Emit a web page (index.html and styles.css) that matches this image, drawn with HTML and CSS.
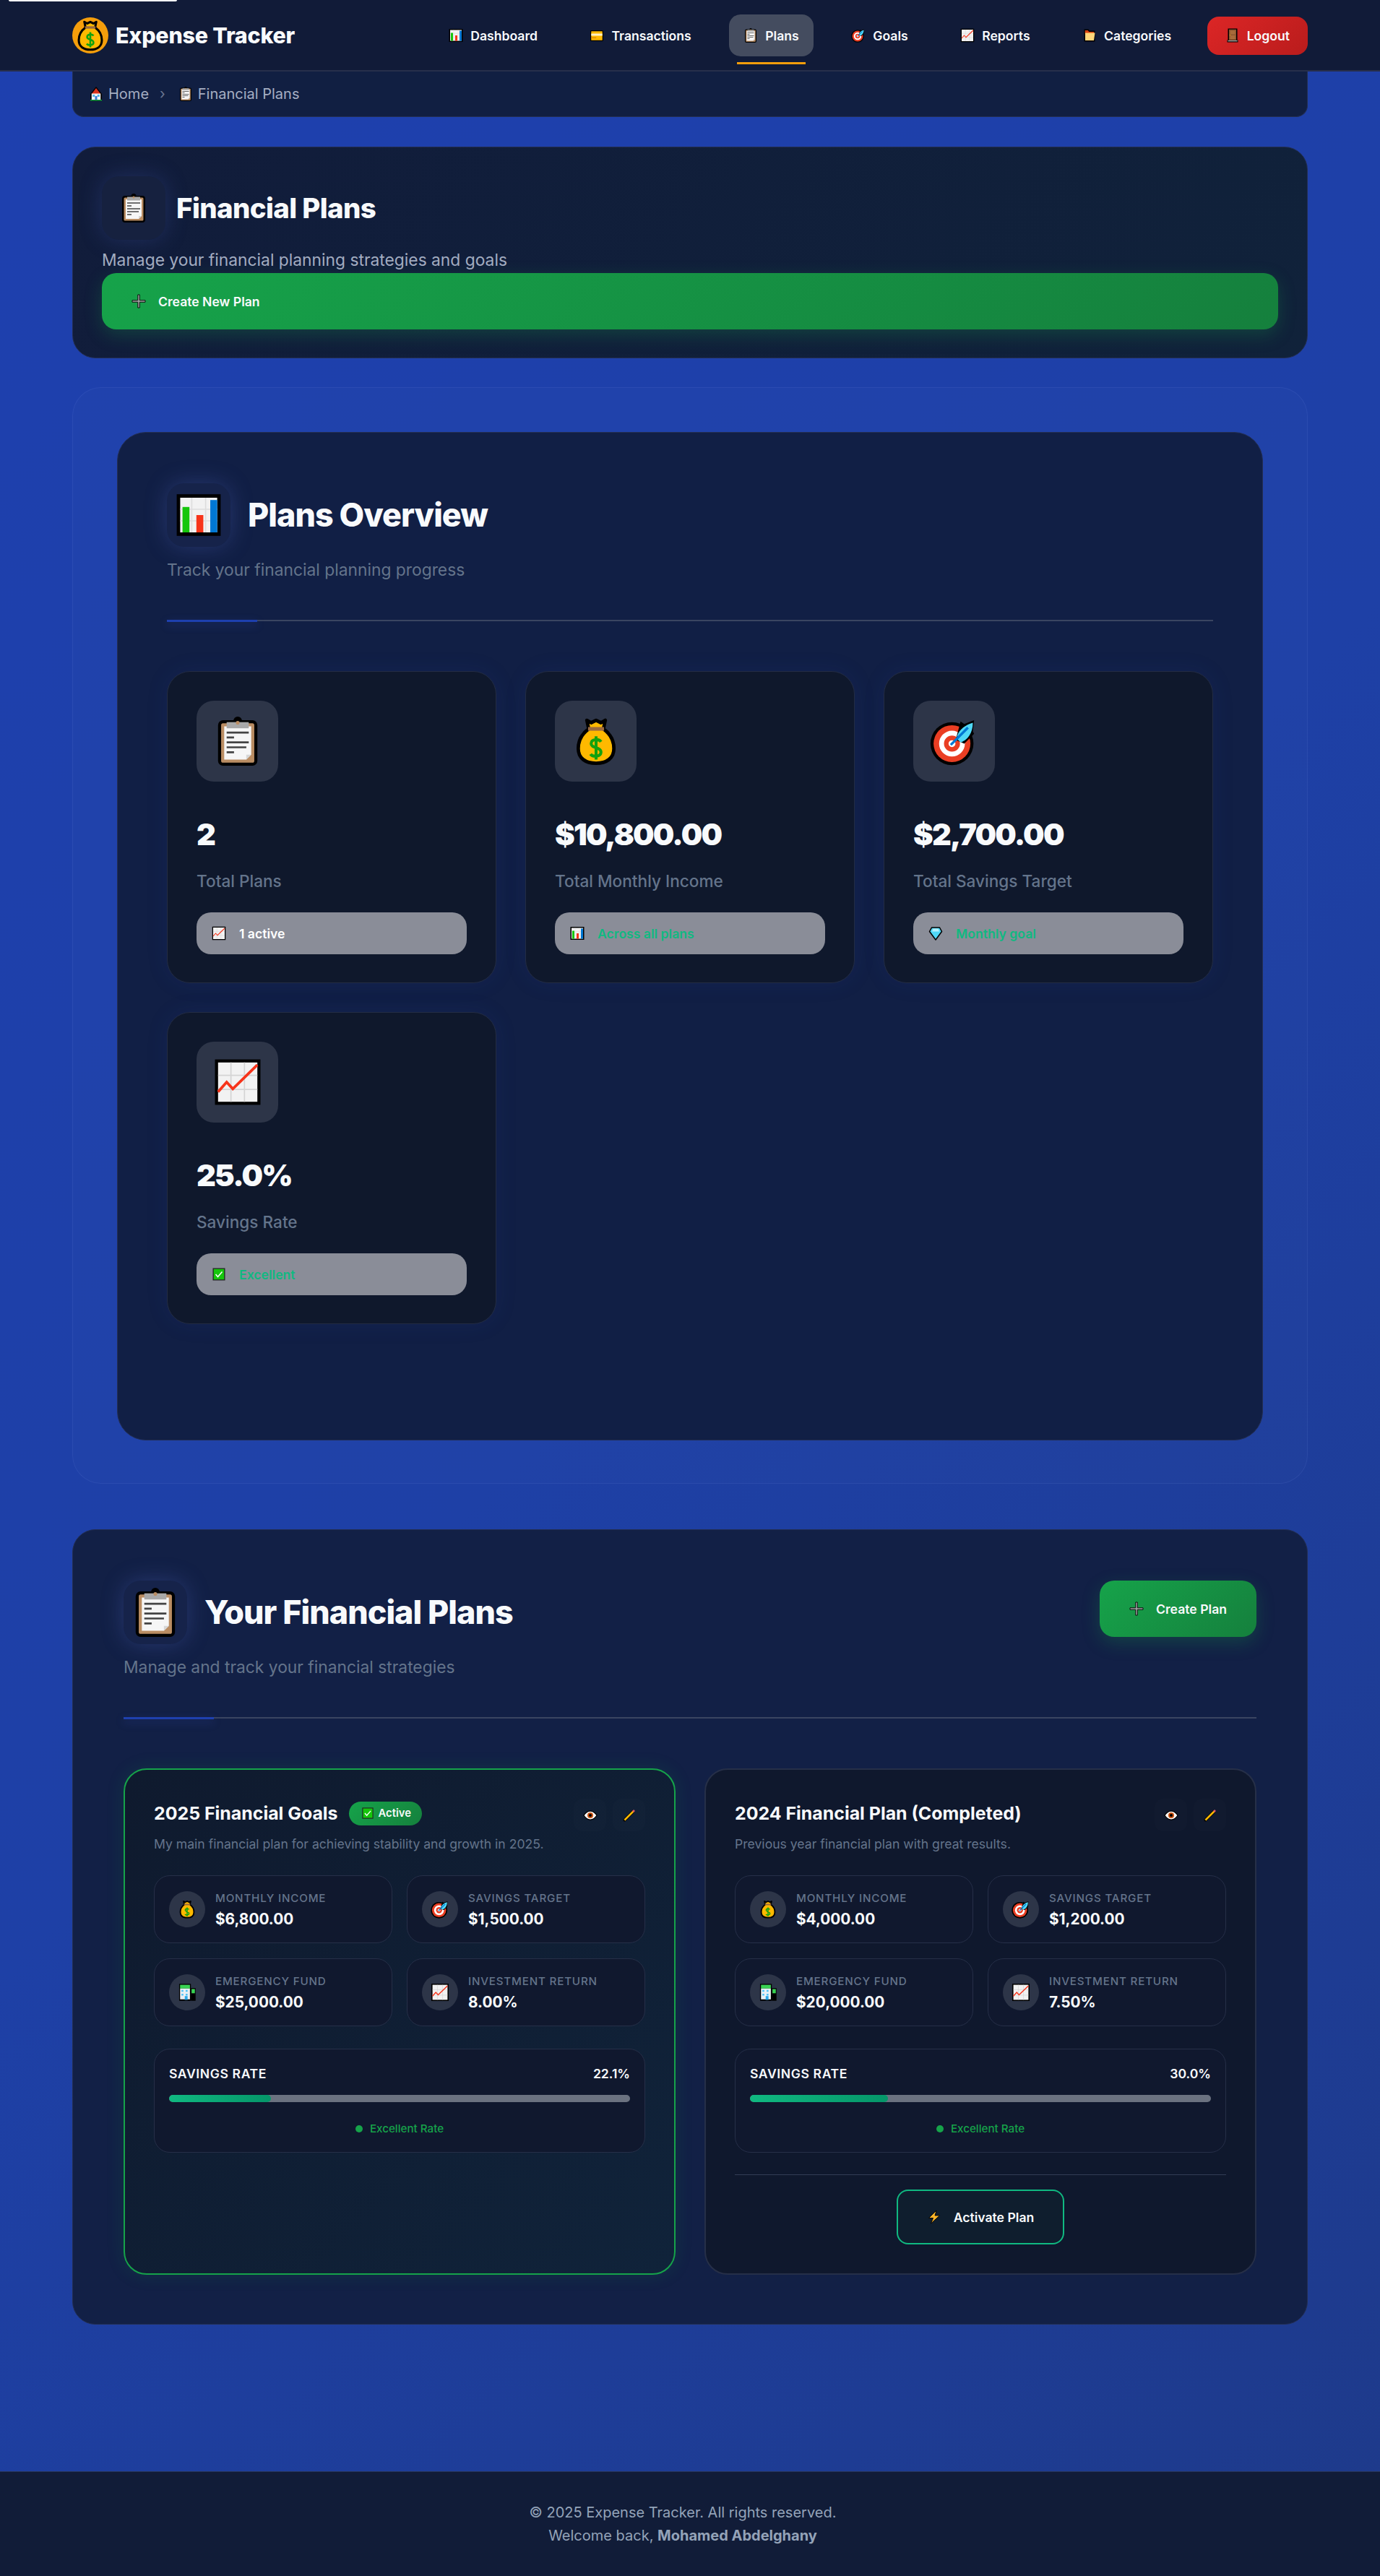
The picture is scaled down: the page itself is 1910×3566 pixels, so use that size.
FILE: index.html
```html
<!DOCTYPE html>
<html lang="en">
  <head>
    <meta charset="UTF-8" />
    <meta name="viewport" content="width=device-width, initial-scale=1.0" />
    <title>Financial Plans - Expense Tracker</title>
    <link rel="stylesheet" href="styles.css">
  </head>

  <body>
    <svg class="icon-defs" xmlns="http://www.w3.org/2000/svg">
      <symbol id="i-clipboard" viewBox="0 0 40 40">
        <circle cx="20" cy="3.500" r="3.500" fill="#000" />
        <rect x="4" y="3" width="32" height="37" rx="4" fill="#000" />
        <rect x="6.500" y="5.500" width="27" height="32" rx="1.500" fill="#ba8d63" />
        <path d="M9 8h22v23l-4 4H9z" fill="#f6f6f6" />
        <path d="M27 35l4-4h-4z" fill="#d6d6d6" />
        <rect x="11" y="4.500" width="18" height="5" fill="#a8a8a8" />
        <circle cx="20" cy="5" r="1.500" fill="#ba8d63" />
        <path d="M11 13h18M11 17h6M11 21h18M11 25h16M11 29h6" stroke="#444" stroke-width="1.600" fill="none" />
      </symbol>
      <symbol id="i-bag" viewBox="0 0 40 40">
        <path d="M12.500 3L16 5l4-2 4 2 3.500-2L26 10c5.500 4 8.500 10 8.500 16 0 8-6 12-14.500 12S5.500 34 5.500 26c0-6 3-12 8.500-16z" fill="#ffb900" stroke="#000" stroke-width="2.800" stroke-linejoin="round" />
        <rect x="13.500" y="8.500" width="13" height="3" fill="#9c6b3f" />
        <path d="M24 20.500c-1.500-2.500-8-2.500-8 1.500 0 4 8 2.500 8 7 0 4-7 4-8.500 1.500M20 16v19" fill="none" stroke="#13a10e" stroke-width="2.400" />
      </symbol>
      <symbol id="i-chart" viewBox="0 0 40 40">
        <rect x="1" y="2" width="38" height="36" fill="#000" />
        <rect x="4" y="5" width="32" height="30" fill="#f2f2f2" />
        <path d="M14 5v30M26 5v30M4 15h32M4 25h32" stroke="#ddd" stroke-width="1" />
        <rect x="6" y="13" width="6" height="22" fill="#16c60c" />
        <rect x="18" y="20" width="6" height="15" fill="#f7341a" />
        <rect x="30" y="7" width="6" height="28" fill="#0078d4" />
      </symbol>
      <symbol id="i-trend" viewBox="0 0 40 40">
        <rect x="1.500" y="1.500" width="37" height="37" fill="#000" />
        <rect x="4" y="4" width="32" height="32" fill="#f2f2f2" />
        <path d="M14.500 4v32M25.500 4v32M4 14.500h32M4 26h32" stroke="#d4d4d4" stroke-width="1" />
        <path d="M4 28l7-8 5 5.500L36 6" fill="none" stroke="#f7341a" stroke-width="2.200" />
      </symbol>
      <symbol id="i-target" viewBox="0 0 40 40">
        <circle cx="18" cy="22" r="17.500" fill="#000" />
        <circle cx="18" cy="22" r="15" fill="#ea3e23" />
        <circle cx="18" cy="22" r="10.500" fill="#fff" />
        <circle cx="18" cy="22" r="6.500" fill="#ea3e23" />
        <circle cx="18" cy="22" r="2.800" fill="#fff" />
        <path d="M25 4l3 2 8-3-1 9 1 2-8 8-7-3z" fill="#000" />
        <path d="M22 18c0-6 6-11 13-13 0 8-4 14-10 16z" fill="#50d8f7" />
        <path d="M17 23L31 9" stroke="#0078d4" stroke-width="2" />
      </symbol>
      <symbol id="i-card" viewBox="0 0 40 40">
        <rect x="2" y="6" width="36" height="30" rx="3" fill="#000" />
        <rect x="4.500" y="8.500" width="31" height="25" rx="1" fill="#ffb900" />
        <rect x="4.500" y="15" width="31" height="6" fill="#fff1c8" />
        <rect x="4.500" y="25" width="14" height="3" fill="#e08a00" />
      </symbol>
      <symbol id="i-folder" viewBox="0 0 40 40">
        <path d="M5 3h12l3 4h15v30H5z" fill="#000" />
        <path d="M7.500 6h8l3 4h14v5H7.500z" fill="#d9420f" />
        <path d="M8 13h27l-3 21H8z" fill="#ffd679" />
      </symbol>
      <symbol id="i-door" viewBox="0 0 40 40">
        <rect x="7" y="1" width="26" height="36" fill="#000" />
        <rect x="10" y="3.500" width="20" height="31" fill="#8e562e" />
        <path d="M13 7h14v10H13zM13 20h14v11H13z" fill="#a96b3a" />
        <circle cx="13" cy="19" r="1.200" fill="#ffb900" />
        <rect x="5" y="33" width="30" height="6" fill="#000" />
        <rect x="7" y="34" width="26" height="2.500" fill="#b3b3b3" />
      </symbol>
      <symbol id="i-house" viewBox="0 0 40 40">
        <path d="M20 0L4 20v20h32V20z" fill="#000" />
        <path d="M20 4L7.500 20h25z" fill="#d9321c" />
        <rect x="7.500" y="19" width="25" height="17" fill="#f4f4f4" />
        <rect x="10.500" y="22" width="6" height="6" fill="#50b8e8" />
        <rect x="23.500" y="22" width="6" height="6" fill="#50b8e8" />
        <rect x="17" y="26" width="6" height="10" fill="#3a7bd5" />
        <rect x="4" y="36" width="32" height="3" fill="#16a34a" />
      </symbol>
      <symbol id="i-plus" viewBox="0 0 40 40">
        <path d="M17.500 2h5v15.500H38v5H22.500V38h-5V22.500H2v-5h15.500z" fill="#a0a0a0" stroke="#000" stroke-width="1.800" />
      </symbol>
      <symbol id="i-diamond" viewBox="0 0 40 40">
        <path d="M9 4h22l6 11-17 23L3 15z" fill="#50d8f7" stroke="#000" stroke-width="3" stroke-linejoin="round" />
        <path d="M13 7h14l3 8H10z" fill="#b5f0ff" />
      </symbol>
      <symbol id="i-check" viewBox="0 0 40 40">
        <rect x="3" y="3" width="34" height="34" fill="#222" />
        <rect x="5.500" y="5.500" width="29" height="29" fill="#16c60c" />
        <path d="M11 20l6 7 12-14" fill="none" stroke="#fff" stroke-width="3" />
      </symbol>
      <symbol id="i-eye" viewBox="0 0 40 40">
        <path d="M2 20c5-8 11-12 18-12s13 4 18 12c-5 8-11 12-18 12S7 28 2 20z" fill="#fff" stroke="#000" stroke-width="2.500" />
        <circle cx="20" cy="20" r="8" fill="#c8500f" />
        <circle cx="20" cy="20" r="4" fill="#000" />
      </symbol>
      <symbol id="i-pencil" viewBox="0 0 40 40">
        <path d="M5 35L32 8" stroke="#000" stroke-width="8" />
        <path d="M6 34L32 8" stroke="#ffb900" stroke-width="5" />
        <path d="M30 10l4-4" stroke="#e0566b" stroke-width="5" />
        <path d="M3 37l2-6 4 4z" fill="#000" />
      </symbol>
      <symbol id="i-building" viewBox="0 0 40 40">
        <rect x="3" y="2" width="25" height="36" fill="#000" />
        <rect x="5" y="4" width="21" height="8" fill="#39d353" />
        <rect x="5" y="12" width="21" height="23" fill="#e9f0f4" />
        <path d="M8 15h4v4H8zM17 15h4v4h-4zM8 23h4v4H8zM17 23h4v4h-4z" fill="#4fc3f7" />
        <rect x="15" y="28" width="6" height="8" fill="#29a8e8" />
        <rect x="28" y="11" width="10" height="27" fill="#000" />
        <rect x="29.500" y="13" width="7" height="9" fill="#39d353" />
      </symbol>
      <symbol id="i-bolt" viewBox="0 0 40 40">
        <path d="M26 2L5 23h12l-6 15 24-22H22z" fill="#fbb42a" stroke="#000" stroke-width="1.800" stroke-linejoin="round" />
      </symbol>
    </svg>

    <div class="skip-bar"></div>

    <header class="navbar">
      <div class="navbar-inner">
        <a class="brand">
          <span class="brand-logo"><svg class="ic ic-logo"><use href="#i-bag" /></svg></span>
          <span class="brand-name">Expense Tracker</span>
        </a>
        <nav class="nav-links">
          <a class="nav-link"><svg class="ic"><use href="#i-chart" /></svg>Dashboard</a>
          <a class="nav-link"><svg class="ic"><use href="#i-card" /></svg>Transactions</a>
          <a class="nav-link active"><svg class="ic"><use href="#i-clipboard" /></svg>Plans</a>
          <a class="nav-link"><svg class="ic"><use href="#i-target" /></svg>Goals</a>
          <a class="nav-link"><svg class="ic"><use href="#i-trend" /></svg>Reports</a>
          <a class="nav-link"><svg class="ic"><use href="#i-folder" /></svg>Categories</a>
          <a class="nav-link logout"><svg class="ic"><use href="#i-door" /></svg>Logout</a>
        </nav>
      </div>
    </header>

    <main class="container">
      <div class="breadcrumb">
        <svg class="ic"><use href="#i-house" /></svg>
        <span>Home</span>
        <span class="crumb-sep">›</span>
        <svg class="ic"><use href="#i-clipboard" /></svg>
        <span>Financial Plans</span>
      </div>

      <section class="hero">
        <div class="hero-title">
          <span class="hero-icon"><svg class="ic ic-40"><use href="#i-clipboard" /></svg></span>
          <h1>Financial Plans</h1>
        </div>
        <p class="hero-sub">Manage your financial planning strategies and goals</p>
        <a class="btn-green btn-wide"><svg class="ic"><use href="#i-plus" /></svg>Create New Plan</a>
      </section>

      <div class="overview-wrap">
        <section class="overview">
          <div class="section-title">
            <span class="title-icon"><svg class="ic ic-64"><use href="#i-chart" /></svg></span>
            <h2>Plans Overview</h2>
          </div>
          <p class="section-sub">Track your financial planning progress</p>
          <div class="section-rule"></div>

          <div class="stats">
            <div class="stat-card">
              <span class="stat-icon"><svg class="ic ic-68"><use href="#i-clipboard" /></svg></span>
              <div class="stat-value">2</div>
              <div class="stat-label">Total Plans</div>
              <div class="stat-pill pill-white"><svg class="ic"><use href="#i-trend" /></svg>1 active</div>
            </div>
            <div class="stat-card">
              <span class="stat-icon"><svg class="ic ic-68"><use href="#i-bag" /></svg></span>
              <div class="stat-value">$10,800.00</div>
              <div class="stat-label">Total Monthly Income</div>
              <div class="stat-pill"><svg class="ic"><use href="#i-chart" /></svg>Across all plans</div>
            </div>
            <div class="stat-card">
              <span class="stat-icon"><svg class="ic ic-68"><use href="#i-target" /></svg></span>
              <div class="stat-value">$2,700.00</div>
              <div class="stat-label">Total Savings Target</div>
              <div class="stat-pill"><svg class="ic"><use href="#i-diamond" /></svg>Monthly goal</div>
            </div>
            <div class="stat-card">
              <span class="stat-icon"><svg class="ic ic-68"><use href="#i-trend" /></svg></span>
              <div class="stat-value">25.0%</div>
              <div class="stat-label">Savings Rate</div>
              <div class="stat-pill"><svg class="ic"><use href="#i-check" /></svg>Excellent</div>
            </div>
          </div>
        </section>
      </div>

      <section class="plans">
        <div class="plans-head">
          <div>
            <div class="section-title">
              <span class="title-icon"><svg class="ic ic-68"><use href="#i-clipboard" /></svg></span>
              <h2>Your Financial Plans</h2>
            </div>
            <p class="section-sub">Manage and track your financial strategies</p>
          </div>
          <a class="btn-green"><svg class="ic"><use href="#i-plus" /></svg>Create Plan</a>
        </div>
        <div class="section-rule"></div>

        <div class="plan-grid">
          <article class="plan-card is-active">
            <div class="plan-head">
              <div class="plan-name">
                <h3>2025 Financial Goals</h3>
                <span class="badge"><svg class="ic ic-18"><use href="#i-check" /></svg>Active</span>
              </div>
              <div class="plan-actions">
                <span class="action-btn"><svg class="ic"><use href="#i-eye" /></svg></span>
                <span class="action-btn"><svg class="ic"><use href="#i-pencil" /></svg></span>
              </div>
            </div>
            <p class="plan-desc">My main financial plan for achieving stability and growth in 2025.</p>
            <div class="metrics">
              <div class="metric">
                <span class="metric-icon"><svg class="ic ic-26"><use href="#i-bag" /></svg></span>
                <div class="metric-text"><div class="metric-label">Monthly Income</div><div class="metric-value">$6,800.00</div></div>
              </div>
              <div class="metric">
                <span class="metric-icon"><svg class="ic ic-26"><use href="#i-target" /></svg></span>
                <div class="metric-text"><div class="metric-label">Savings Target</div><div class="metric-value">$1,500.00</div></div>
              </div>
              <div class="metric">
                <span class="metric-icon"><svg class="ic ic-26"><use href="#i-building" /></svg></span>
                <div class="metric-text"><div class="metric-label">Emergency Fund</div><div class="metric-value">$25,000.00</div></div>
              </div>
              <div class="metric">
                <span class="metric-icon"><svg class="ic ic-26"><use href="#i-trend" /></svg></span>
                <div class="metric-text"><div class="metric-label">Investment Return</div><div class="metric-value">8.00%</div></div>
              </div>
            </div>
            <div class="rate-box">
              <div class="rate-head"><span class="rate-label">Savings Rate</span><span>22.1%</span></div>
              <div class="rate-track"><div class="rate-fill" style="width: 22.1%"></div></div>
              <div class="rate-status"><span class="rate-dot"></span>Excellent Rate</div>
            </div>
          </article>

          <article class="plan-card">
            <div class="plan-head">
              <div class="plan-name">
                <h3>2024 Financial Plan (Completed)</h3>
              </div>
              <div class="plan-actions">
                <span class="action-btn"><svg class="ic"><use href="#i-eye" /></svg></span>
                <span class="action-btn"><svg class="ic"><use href="#i-pencil" /></svg></span>
              </div>
            </div>
            <p class="plan-desc">Previous year financial plan with great results.</p>
            <div class="metrics">
              <div class="metric">
                <span class="metric-icon"><svg class="ic ic-26"><use href="#i-bag" /></svg></span>
                <div class="metric-text"><div class="metric-label">Monthly Income</div><div class="metric-value">$4,000.00</div></div>
              </div>
              <div class="metric">
                <span class="metric-icon"><svg class="ic ic-26"><use href="#i-target" /></svg></span>
                <div class="metric-text"><div class="metric-label">Savings Target</div><div class="metric-value">$1,200.00</div></div>
              </div>
              <div class="metric">
                <span class="metric-icon"><svg class="ic ic-26"><use href="#i-building" /></svg></span>
                <div class="metric-text"><div class="metric-label">Emergency Fund</div><div class="metric-value">$20,000.00</div></div>
              </div>
              <div class="metric">
                <span class="metric-icon"><svg class="ic ic-26"><use href="#i-trend" /></svg></span>
                <div class="metric-text"><div class="metric-label">Investment Return</div><div class="metric-value">7.50%</div></div>
              </div>
            </div>
            <div class="rate-box">
              <div class="rate-head"><span class="rate-label">Savings Rate</span><span>30.0%</span></div>
              <div class="rate-track"><div class="rate-fill" style="width: 30%"></div></div>
              <div class="rate-status"><span class="rate-dot"></span>Excellent Rate</div>
            </div>
            <div class="plan-foot">
              <a class="btn-outline"><svg class="ic"><use href="#i-bolt" /></svg>Activate Plan</a>
            </div>
          </article>
        </div>
      </section>
    </main>

    <footer class="footer">
      <p>© 2025 Expense Tracker. All rights reserved.</p>
      <p>Welcome back, <strong>Mohamed Abdelghany</strong></p>
    </footer>
  </body>
</html>
```

FILE: styles.css
```css
* {
  box-sizing: border-box;
}

body {
  margin: 0;
  font-family: Inter, "Liberation Sans", sans-serif;
  color: #f8fafc;
  background: linear-gradient(135deg, #1e40af 0%, #1e40a6 50%, #1e3a8a 100%);
}

h1,
h2,
h3,
p {
  margin: 0;
}

.icon-defs {
  display: none;
}

.ic {
  width: 20px;
  height: 20px;
  flex: none;
}

.ic-18 { width: 18px; height: 18px; }
.ic-26 { width: 26px; height: 26px; }
.ic-40 { width: 40px; height: 40px; }
.ic-64 { width: 64px; height: 64px; }
.ic-68 { width: 68px; height: 68px; }
.ic-logo { width: 44px; height: 44px; }

.skip-bar {
  position: absolute;
  top: 0;
  left: 12px;
  width: 233px;
  height: 2px;
  background: #fff;
  border-radius: 0 0 2px 2px;
  z-index: 5;
}

/* navbar */
.navbar {
  height: 99px;
  background: #111b38;
  border-bottom: 2px solid #272f4b;
}

.navbar-inner {
  width: 1710px;
  height: 97px;
  padding-top: 1px;
  margin: 0 auto;
  display: flex;
  align-items: center;
  justify-content: space-between;
}

.brand {
  display: flex;
  align-items: center;
  gap: 10px;
}

.brand-logo {
  width: 50px;
  height: 50px;
  border-radius: 50%;
  background: #f59e0b;
  display: flex;
  align-items: center;
  justify-content: center;
}

.brand-name {
  font-size: 30.4px;
  font-weight: 800;
  letter-spacing: -0.2px;
}

.nav-links {
  display: flex;
  align-items: center;
  gap: 32.5px;
}

.nav-link {
  position: relative;
  display: flex;
  align-items: center;
  gap: 10px;
  height: 58px;
  padding: 0 20px;
  border-radius: 16px;
  font-size: 17.6px;
  font-weight: 600;
}

.nav-link.active {
  background: #444c5f;
}

.nav-link.active::after {
  content: "";
  position: absolute;
  left: 11px;
  right: 11px;
  bottom: -11px;
  height: 3px;
  background: #f59e0b;
}

.nav-link.logout {
  height: 53px;
  margin-left: -3px;
  padding: 0 25px;
  background: linear-gradient(135deg, #dc2626, #b91c1c);
}

/* page */
.container {
  width: 1710px;
  margin: 0 auto;
}

.breadcrumb {
  height: 63px;
  display: flex;
  align-items: center;
  gap: 7px;
  padding: 0 22px;
  background: #111f42;
  border: 1px solid #232e52;
  border-top: none;
  border-radius: 0 0 16px 16px;
  font-size: 20px;
  color: #a5aec2;
}

.crumb-sep {
  margin: 0 11px 0 8px;
  color: #6b7691;
}

.hero {
  margin-top: 41px;
  padding: 40px 40px 39px;
  background: linear-gradient(135deg, #111c3b, #10223a);
  border: 1px solid #232e52;
  border-radius: 32px;
}

.hero-title {
  display: flex;
  align-items: center;
  gap: 15px;
}

.hero-icon {
  width: 88px;
  height: 88px;
  border-radius: 24px;
  background: #16213f;
  display: flex;
  align-items: center;
  justify-content: center;
  box-shadow: 0 0 30px rgba(59, 80, 160, 0.35);
}

.hero-title h1 {
  font-size: 38.4px;
  font-weight: 800;
  letter-spacing: -0.6px;
}

.hero-sub {
  margin-top: 12px;
  margin-bottom: 2px;
  font-size: 22.8px;
  line-height: 32px;
  color: #a2acc0;
}

.btn-green {
  display: flex;
  align-items: center;
  gap: 17px;
  height: 78px;
  padding: 0 41px;
  border-radius: 20px;
  background: linear-gradient(135deg, #16a34a, #15803d);
  box-shadow: 0 8px 24px rgba(22, 163, 74, 0.25);
  font-size: 17.6px;
  font-weight: 600;
}

.btn-wide {
  width: 100%;
}

.overview-wrap {
  margin-top: 40px;
  padding: 61px 61px 59px;
  background: rgba(255, 255, 255, 0.012);
  border: 1px solid rgba(120, 150, 230, 0.12);
  border-radius: 40px;
}

.overview {
  padding: 70px 68px 160px;
  background: #111f45;
  border: 1px solid #232e52;
  border-radius: 40px;
}

.section-title {
  display: flex;
  align-items: center;
  gap: 24px;
}

.title-icon {
  width: 88px;
  height: 88px;
  border-radius: 24px;
  background: #16234a;
  display: flex;
  align-items: center;
  justify-content: center;
  box-shadow: 0 0 30px rgba(80, 100, 190, 0.35);
}

.section-title h2 {
  font-size: 44.8px;
  font-weight: 800;
  letter-spacing: -0.95px;
}

.section-sub {
  margin-top: 16px;
  font-size: 22.8px;
  line-height: 32px;
  color: #64748b;
}

.section-rule {
  position: relative;
  height: 2px;
  margin-top: 53px;
  background: #3a4561;
}

.section-rule::after {
  content: "";
  position: absolute;
  left: 0;
  top: 0;
  width: 125px;
  height: 3px;
  background: #1e40af;
  box-shadow: 0 4px 12px rgba(59, 80, 200, 0.4);
}

.stats {
  margin-top: 69px;
  display: grid;
  grid-template-columns: repeat(3, 1fr);
  gap: 40px;
}

.stat-card {
  height: 432px;
  padding: 40px;
  background: #0f182c;
  border: 1px solid #232c44;
  border-radius: 32px;
  box-shadow: 0 0 30px rgba(30, 64, 175, 0.12);
}

.stat-icon {
  width: 113px;
  height: 112px;
  border-radius: 24px;
  background: #2d3548;
  display: flex;
  align-items: center;
  justify-content: center;
}

.stat-value {
  margin-top: 44px;
  font-size: 41.6px;
  line-height: 58px;
  font-weight: 900;
  letter-spacing: -1.8px;
}

.stat-label {
  margin-top: 20px;
  font-size: 22.6px;
  line-height: 32px;
  font-weight: 500;
  color: #64748b;
}

.stat-pill {
  margin-top: 27px;
  height: 58px;
  display: flex;
  align-items: center;
  gap: 18px;
  padding: 0 21px;
  border-radius: 20px;
  background: #8a8d98;
  font-size: 17.6px;
  font-weight: 600;
  color: #10b981;
}

.pill-white {
  color: #fff;
}

.plans {
  margin-top: 63px;
  padding: 70px 70px 68px;
  background: #122046;
  border: 1px solid #232e52;
  border-radius: 32px;
}

.plans-head {
  display: flex;
  justify-content: space-between;
  align-items: flex-start;
}

.plan-grid {
  margin-top: 69px;
  display: grid;
  grid-template-columns: 1fr 1fr;
  gap: 40px;
}

.plan-card {
  padding: 40px;
  background: #0f182d;
  border: 2px solid #262f48;
  border-radius: 32px;
}

.plan-card.is-active {
  background: linear-gradient(135deg, #0f1a2e, #10233a);
  border-color: #16a34a;
  box-shadow: 0 0 24px rgba(22, 163, 74, 0.15);
}

.plan-head {
  display: flex;
  justify-content: space-between;
  align-items: flex-start;
}

.plan-name {
  height: 40px;
  display: flex;
  align-items: center;
  gap: 15px;
}

.plan-name h3 {
  font-size: 24.9px;
  font-weight: 700;
}

.badge {
  display: flex;
  align-items: center;
  gap: 6px;
  height: 33px;
  padding: 0 15px 0 17px;
  border-radius: 20px;
  background: linear-gradient(135deg, #16a34a, #15803d);
  font-size: 14.8px;
  font-weight: 600;
}

.plan-actions {
  display: flex;
  gap: 9px;
}

.action-btn {
  width: 45px;
  height: 45px;
  border-radius: 12px;
  background: rgba(255, 255, 255, 0.012);
  display: flex;
  align-items: center;
  justify-content: center;
}

.plan-desc {
  margin-top: 6px;
  font-size: 17.6px;
  line-height: 24px;
  color: #64748b;
}

.metrics {
  margin-top: 31px;
  display: grid;
  grid-template-columns: 1fr 1fr;
  gap: 21px 20px;
}

.metric {
  height: 94px;
  display: flex;
  align-items: center;
  gap: 14px;
  padding: 0 20px;
  background: #10182e;
  border: 1px solid #262f48;
  border-radius: 22px;
}

.metric-icon {
  width: 50px;
  height: 50px;
  border-radius: 50%;
  background: #2d3548;
  display: flex;
  align-items: center;
  justify-content: center;
}

.metric-text {
  padding-top: 3px;
}

.metric-label {
  font-size: 15.2px;
  line-height: 20px;
  font-weight: 500;
  letter-spacing: 0.8px;
  text-transform: uppercase;
  color: #64748b;
}

.metric-value {
  margin-top: 5px;
  font-size: 20.8px;
  line-height: 28px;
  font-weight: 700;
}

.rate-box {
  margin-top: 31px;
  height: 144px;
  padding: 20px;
  background: #10182e;
  border: 1px solid #262f48;
  border-radius: 22px;
}

.rate-head {
  display: flex;
  justify-content: space-between;
  font-size: 17.6px;
  line-height: 28px;
  font-weight: 600;
}

.rate-label {
  letter-spacing: 0.6px;
  text-transform: uppercase;
}

.rate-track {
  height: 10px;
  margin-top: 15px;
  background: #6b7280;
  border-radius: 5px;
  overflow: hidden;
}

.rate-fill {
  height: 100%;
  background: linear-gradient(90deg, #10b981, #059669);
  border-radius: 5px;
}

.rate-status {
  margin-top: 27px;
  display: flex;
  justify-content: center;
  align-items: center;
  gap: 10px;
  font-size: 15.2px;
  font-weight: 500;
  color: #16a34a;
}

.rate-dot {
  width: 10px;
  height: 10px;
  border-radius: 50%;
  background: #16a34a;
}

.plan-foot {
  margin-top: 30px;
  padding-top: 20px;
  border-top: 1px solid #333d55;
  display: flex;
  justify-content: center;
}

.btn-outline {
  display: flex;
  align-items: center;
  gap: 17px;
  height: 76px;
  padding: 0 40px;
  background: #0f1e2e;
  border: 2px solid #10b981;
  border-radius: 16px;
  font-size: 17.6px;
  font-weight: 600;
}

.footer {
  margin-top: 203px;
  height: 145px;
  padding: 40px 20px 0 0;
  background: #111c38;
  border-top: 1px solid #273355;
  text-align: center;
  font-size: 20px;
  line-height: 32px;
  color: #94a3b8;
}
```
